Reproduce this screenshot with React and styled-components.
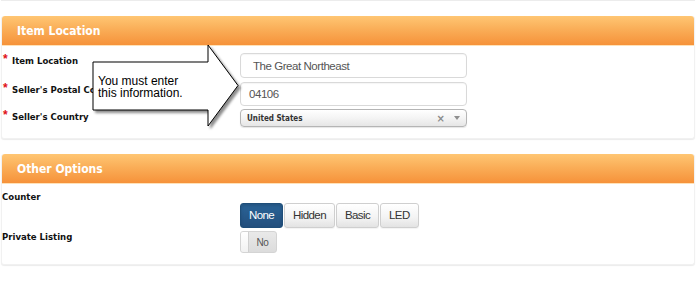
import React from "react";
import styled, { createGlobalStyle } from "styled-components";

const Global = createGlobalStyle`
  html, body { margin: 0; padding: 0; background: #fff; }
  body { font-family: "Liberation Sans", Arial, sans-serif; }
`;

const Page = styled.div`
  position: relative;
  width: 700px;
  height: 285px;
  overflow: hidden;
  padding: 0 5px 0 1px;
  box-sizing: border-box;
`;

const TopStrip = styled.div`
  height: 1px;
  background: #ececec;
`;

const Panel = styled.section`
  margin-top: ${(p) => p.$top}px;
  background: #fff;
  border-radius: 3px;
  box-shadow: 0 1px 1px rgba(0, 0, 0, 0.08);
  border: 1px solid #f1f1f1;
  border-top: none;
`;

const Header = styled.div`
  height: ${(p) => p.$h}px;
  display: flex;
  align-items: center;
  padding-left: 15px;
  border-radius: 3px 3px 0 0;
  background: linear-gradient(to bottom, #ffc673 0%, #faae58 45%, #f6923a 100%);
  border-bottom: 1px solid #ffe2b8;
  box-sizing: border-box;
`;

const Title = styled.h2`
  margin: 0;
  color: #fff;
  font-family: "DejaVu Sans Condensed", "DejaVu Sans", sans-serif;
  font-stretch: semi-condensed;
  font-weight: bold;
  font-size: 12px;
`;

const Body = styled.div`
  display: grid;
  grid-template-columns: 238px 227px;
  row-gap: ${(p) => p.$gap || 0}px;
  padding: ${(p) => p.$pt}px 0 ${(p) => p.$pb}px 0;
`;

const Label = styled.label`
  display: block;
  padding-top: ${(p) => p.$pt || 0}px;
  font-family: "DejaVu Sans Condensed", "DejaVu Sans", sans-serif;
  font-stretch: semi-condensed;
  font-weight: bold;
  font-size: 9.5px;
  line-height: 12px;
  color: #111;
  white-space: nowrap;
`;

const Star = styled.span`
  display: inline-block;
  width: 10px;
  color: #e0101a;
  font-family: "Liberation Sans", Arial, sans-serif;
  font-size: 12px;
  line-height: 8px;
  vertical-align: top;
  padding-left: 1px;
  margin-right: -1px;
`;

const Input = styled.div`
  height: ${(p) => p.$h}px;
  margin-bottom: ${(p) => p.$mb || 0}px;
  box-sizing: border-box;
  border: 1px solid #d9d9d9;
  border-radius: 4px;
  box-shadow: inset 0 1px 1px rgba(0, 0, 0, 0.04);
  display: flex;
  align-items: center;
  padding-left: ${(p) => p.$pl}px;
  font-family: "Liberation Sans", Arial, sans-serif;
  font-size: 11.5px;
  letter-spacing: -0.45px;
  color: #555;
`;

const Select = styled.div`
  height: 18px;
  box-sizing: border-box;
  border: 1px solid #b5b5b5;
  border-radius: 4px;
  background: linear-gradient(to bottom, #ffffff 0%, #f4f4f4 50%, #e6e6e6 100%);
  box-shadow: 0 1px 1px rgba(0, 0, 0, 0.1);
  display: flex;
  align-items: center;
  padding: 0 6px 0 6px;
`;

const SelectText = styled.span`
  flex: 1;
  font-family: "DejaVu Sans Condensed", "DejaVu Sans", sans-serif;
  font-stretch: semi-condensed;
  font-weight: bold;
  font-size: 8px;
  color: #333;
`;

const Clear = styled.span`
  font-family: "DejaVu Sans", sans-serif;
  font-weight: bold;
  font-size: 10px;
  color: #8a8a8a;
  margin-right: 9px;
`;

const Caret = styled.span`
  width: 0;
  height: 0;
  border-left: 3px solid transparent;
  border-right: 3px solid transparent;
  border-top: 4px solid #8f8f8f;
`;

const Control = styled.div`
  margin-top: ${(p) => p.$mt || 0}px;
  display: flex;
  gap: 1px;
`;

const Btn = styled.button`
  height: 25px;
  padding: 0 8px;
  border-radius: 3px;
  border: 1px solid ${(p) => (p.$active ? "#1f4e79" : "#cfcfcf")};
  background: ${(p) =>
    p.$active
      ? "linear-gradient(to bottom, #2a6397 0%, #234f7d 100%)"
      : "linear-gradient(to bottom, #ffffff 0%, #f3f3f3 60%, #e3e3e3 100%)"};
  color: ${(p) => (p.$active ? "#fff" : "#333")};
  font-family: "Liberation Sans", Arial, sans-serif;
  font-size: 11.5px;
  letter-spacing: -0.6px;
  line-height: 23px;
  box-shadow: ${(p) => (p.$active ? "inset 0 2px 3px rgba(0,0,0,0.15)" : "0 1px 1px rgba(0,0,0,0.05)")};
`;

const Toggle = styled.div`
  width: 37px;
  height: 22px;
  box-sizing: border-box;
  border: 1px solid #d4d4d4;
  border-radius: 3px;
  background: linear-gradient(to bottom, #e9e9e9 0%, #dcdcdc 100%);
  display: flex;
  overflow: hidden;
`;

const Knob = styled.span`
  width: 7px;
  background: linear-gradient(to bottom, #ffffff 0%, #f1f1f1 100%);
  border-right: 1px solid #cfcfcf;
`;

const ToggleText = styled.span`
  flex: 1;
  display: flex;
  align-items: center;
  justify-content: center;
  font-family: "Liberation Sans", Arial, sans-serif;
  font-size: 10px;
  letter-spacing: -0.3px;
  color: #555;
`;

const Callout = styled.div`
  position: absolute;
  left: 88px;
  top: 40px;
  width: 160px;
  height: 95px;
`;

const CalloutShape = styled.svg`
  position: absolute;
  inset: 0;
  overflow: visible;
`;

const CalloutText = styled.p`
  position: absolute;
  left: 10px;
  top: 35px;
  margin: 0;
  font-family: "Liberation Sans", Arial, sans-serif;
  font-size: 12px;
  line-height: 12px;
  color: #000;
`;

export default function App() {
  return (
    <>
      <Global />
      <Page>
        <TopStrip />
        <Panel $top={15}>
          <Header $h={30}>
            <Title>Item Location</Title>
          </Header>
          <Body $pt={7} $pb={11}>
            <Label $pt={2}>
              <Star>*</Star>Item Location
            </Label>
            <Input $h={25} $pl={12} $mb={4}>
              The Great Northeast
            </Input>
            <Label $pt={2}>
              <Star>*</Star>Seller's Postal Code
            </Label>
            <Input $h={24} $pl={8} $mb={3}>
              04106
            </Input>
            <Label $pt={2}>
              <Star>*</Star>Seller's Country
            </Label>
            <Select>
              <SelectText>United States</SelectText>
              <Clear>×</Clear>
              <Caret />
            </Select>
          </Body>
        </Panel>
        <Panel $top={15}>
          <Header $h={30}>
            <Title>Other Options</Title>
          </Header>
          <Body $pt={7} $pb={11} $gap={3}>
            <Label>Counter</Label>
            <Control $mt={12}>
              <Btn $active>None</Btn>
              <Btn>Hidden</Btn>
              <Btn>Basic</Btn>
              <Btn>LED</Btn>
            </Control>
            <Label>Private Listing</Label>
            <Control>
              <Toggle>
                <Knob />
                <ToggleText>No</ToggleText>
              </Toggle>
            </Control>
          </Body>
        </Panel>
        <Callout>
          <CalloutShape width="160" height="95" viewBox="0 0 160 95">
            <defs>
              <filter id="sh" x="-10%" y="-10%" width="130%" height="130%">
                <feDropShadow dx="2.5" dy="2.5" stdDeviation="1.2" floodColor="#000" floodOpacity="0.45" />
              </filter>
            </defs>
            <polygon
              points="5,22 120,22 120,5 150,45.5 120,86 120,70 5,70"
              fill="#fff"
              stroke="#000"
              strokeWidth="1"
              filter="url(#sh)"
            />
          </CalloutShape>
          <CalloutText>
            You must enter
            <br />
            this information.
          </CalloutText>
        </Callout>
      </Page>
    </>
  );
}
